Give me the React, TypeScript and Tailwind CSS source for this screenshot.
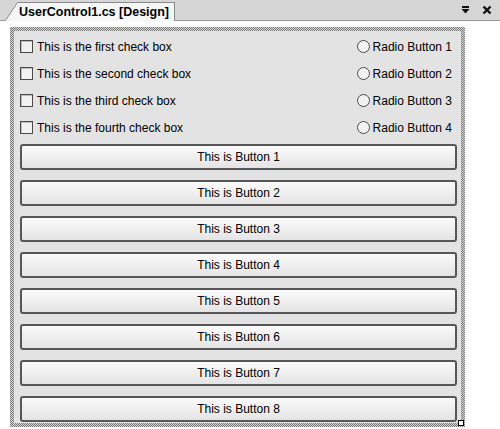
import React from 'react';

const checks = ['first', 'second', 'third', 'fourth'];
const buttons = [1, 2, 3, 4, 5, 6, 7, 8];

function CheckRow({ label, radio }: { label: string; radio: string }) {
  return (
    <div className="flex h-[27px] items-center">
      <span className="h-[13px] w-[13px] shrink-0 border border-[#4a4a4a] bg-[#f2f2f2] shadow-[inset_1px_1px_0_#bdbdbd]" />
      <span className="ml-[4px] whitespace-nowrap">This is the {label} check box</span>
      <span className="ml-auto h-[13px] w-[13px] shrink-0 rounded-full border border-[#4a4a4a] bg-[#f2f2f2]" />
      <span className="ml-[3px] mr-[5px] whitespace-nowrap">{radio}</span>
    </div>
  );
}

export default function App() {
  return (
    <div className="h-[429px] w-[500px] overflow-hidden bg-white font-['Liberation_Sans',Arial,sans-serif] text-[12px] text-black">
      <div className="flex h-[21px] items-end border-b border-[#9a9a9a] bg-[#d6d6d6]">
        <div className="-mb-px ml-[5px] flex h-[19px] items-stretch">
          <svg width="13" height="19" viewBox="0 0 13 19" className="block">
            <path d="M0 19 L12 1 L13 1 L13 19 Z" fill="#f6f6f6" />
            <path d="M0.5 18.5 L12.5 0.5 L13 0.5" fill="none" stroke="#8a8a8a" />
          </svg>
          <div className="flex items-center border-t border-r border-[#8a8a8a] bg-[#f6f6f6] pr-[5px] pl-[1px] text-[12.5px] font-bold leading-none">
            UserControl1.cs [Design]
          </div>
        </div>
        <div className="ml-auto mr-[8px] flex h-full items-center gap-[12px]">
          <svg width="9" height="8" viewBox="0 0 9 8">
            <rect x="1" y="0" width="7" height="2" fill="#111" />
            <path d="M0.5 3 H8.5 L4.5 7.5 Z" fill="#111" />
          </svg>
          <svg width="10" height="10" viewBox="0 0 10 10">
            <path d="M1.5 1.5 L8.5 8.5 M8.5 1.5 L1.5 8.5" stroke="#111" strokeWidth="2.4" />
          </svg>
        </div>
      </div>
      <div className="pl-[10px] pt-[6px]">
        <div className="relative w-[455px] bg-[repeating-conic-gradient(#7c7c7c_0_25%,#d4d4d4_0_50%)] bg-size-[2px_2px] p-[4px]">
          <div className="bg-[#e3e3e3] pt-[2px] pr-[4px] pb-[1px] pl-[6px]">
            {checks.map((c, i) => (
              <CheckRow key={c} label={c} radio={`Radio Button ${i + 1}`} />
            ))}
            <div className="mt-[3px] flex flex-col gap-[10px]">
              {buttons.map((n) => (
                <div
                  key={n}
                  className="flex h-[26px] items-center justify-center rounded-[3px] border-2 border-[#575757] bg-gradient-to-b from-[#fbfbfb] to-[#e4e4e4]"
                >
                  This is Button {n}
                </div>
              ))}
            </div>
          </div>
          <span className="absolute right-[1px] bottom-[1px] h-[6px] w-[6px] border border-black bg-white" />
        </div>
      </div>
    </div>
  );
}
